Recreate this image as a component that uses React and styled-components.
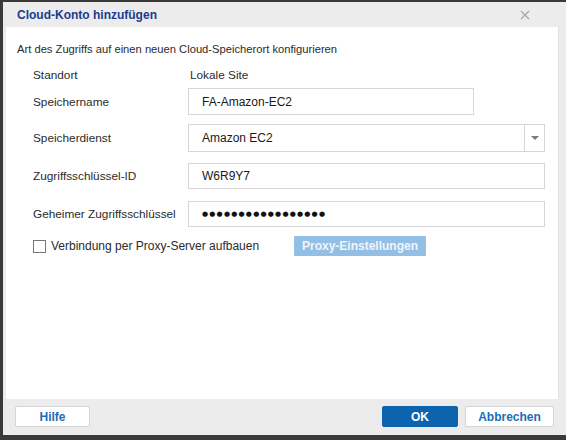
import React from 'react'
import styled, { createGlobalStyle } from 'styled-components'

const GlobalStyle = createGlobalStyle`
  html, body {
    margin: 0;
    padding: 0;
    background: #3a3a3a;
    width: 566px;
    height: 440px;
    overflow: hidden;
  }
  * { box-sizing: border-box; }
`

const Dialog = styled.div`
  margin: 2px 0 0 3px;
  width: 563px;
  height: 433px;
  background: #ececec;
  display: flex;
  flex-direction: column;
  font-family: "Liberation Sans", Arial, sans-serif;
`

const Header = styled.div`
  height: 25px;
  display: flex;
  align-items: center;
  justify-content: space-between;
  padding: 0 36px 0 14px;
  background: #ececec;
`

const Title = styled.h1`
  margin: 0;
  font-size: 12px;
  font-weight: bold;
  color: #1d3b8e;
`

const Close = styled.svg`
  width: 10px;
  height: 10px;
  display: block;
`

const Body = styled.div`
  flex: 1;
  margin: 0 7px 0 3px;
  background: #fff;
  border-right: 1px solid #e2e2e2;
  padding: 15px 0 0 11px;
  display: flex;
  flex-direction: column;
`

const Intro = styled.div`
  font-size: 11.2px;
  line-height: 14px;
  color: #2b2b2b;
`

const Row = styled.div`
  display: flex;
  align-items: center;
  margin-top: ${p => p.$gap}px;
  padding-left: 16px;
`

const Label = styled.div`
  width: 155px;
  font-size: 11.8px;
  line-height: 14px;
  color: #2b2b2b;
`

const Value = styled.div`
  font-size: 11.8px;
  line-height: 14px;
  color: #2b2b2b;
  padding-left: 2px;
`

const Field = styled.div`
  width: ${p => p.$w}px;
  height: ${p => p.$h}px;
  border: 1px solid #d6d6d6;
  display: flex;
  align-items: center;
  padding-left: 13px;
  font-size: 12px;
  color: #1a1a1a;
  background: #fff;
`

const Select = styled(Field)`
  padding-right: 0;
  justify-content: space-between;
`

const Arrow = styled.div`
  width: 20px;
  height: 100%;
  border-left: 1px solid #d6d6d6;
  display: flex;
  align-items: center;
  justify-content: center;
  &::after {
    content: "";
    border-left: 4px solid transparent;
    border-right: 4px solid transparent;
    border-top: 4px solid #7a7a7a;
  }
`

const Dots = styled.span`
  font-family: "DejaVu Sans", sans-serif;
  font-size: 7px;
  letter-spacing: 1.2px;
  color: #111;
`

const CheckRow = styled.div`
  display: flex;
  align-items: center;
  margin-top: 9px;
  padding-left: 16px;
`

const Check = styled.span`
  width: 13px;
  height: 13px;
  border: 1px solid #777;
  background: #fff;
  margin-right: 5px;
`

const CheckLabel = styled.span`
  font-size: 12px;
  color: #2b2b2b;
  width: 243px;
`

const ProxyButton = styled.button`
  width: 132px;
  height: 20px;
  border: none;
  border-radius: 1px;
  background: #92bfe3;
  color: #eef5fb;
  font-family: "Liberation Sans", Arial, sans-serif;
  font-size: 12px;
  font-weight: bold;
  padding: 0;
`

const Footer = styled.div`
  height: 36px;
  display: flex;
  align-items: flex-start;
  padding: 7px 12px 0 12px;
  gap: 7px;
`

const Spacer = styled.div`
  flex: 1;
`

const Button = styled.button`
  width: ${p => p.$w}px;
  height: 21px;
  border: 1px solid ${p => (p.$primary ? '#0c63ae' : '#d4d4d4')};
  border-radius: 2px;
  background: ${p => (p.$primary ? '#0c63ae' : '#fff')};
  color: ${p => (p.$primary ? '#fff' : '#1e6db5')};
  font-family: "Liberation Sans", Arial, sans-serif;
  font-size: 12px;
  font-weight: bold;
  padding: 0;
`

export default function App() {
  return (
    <>
      <GlobalStyle />
      <Dialog>
        <Header>
          <Title>Cloud-Konto hinzufügen</Title>
          <Close viewBox="0 0 10 10">
            <path d="M1 1L9 9M9 1L1 9" stroke="#a8a8a8" strokeWidth="1.3" />
          </Close>
        </Header>
        <Body>
          <Intro>Art des Zugriffs auf einen neuen Cloud-Speicherort konfigurieren</Intro>
          <Row $gap={12}>
            <Label>Standort</Label>
            <Value>Lokale Site</Value>
          </Row>
          <Row $gap={6}>
            <Label>Speichername</Label>
            <Field $w={286} $h={27}>FA-Amazon-EC2</Field>
          </Row>
          <Row $gap={9}>
            <Label>Speicherdienst</Label>
            <Select $w={357} $h={28}>
              Amazon EC2
              <Arrow />
            </Select>
          </Row>
          <Row $gap={11}>
            <Label>Zugriffsschlüssel-ID</Label>
            <Field $w={357} $h={26}>W6R9Y7</Field>
          </Row>
          <Row $gap={12}>
            <Label>Geheimer Zugriffsschlüssel</Label>
            <Field $w={357} $h={26}>
              <Dots>●●●●●●●●●●●●●●●●●</Dots>
            </Field>
          </Row>
          <CheckRow>
            <Check />
            <CheckLabel>Verbindung per Proxy-Server aufbauen</CheckLabel>
            <ProxyButton>Proxy-Einstellungen</ProxyButton>
          </CheckRow>
        </Body>
        <Footer>
          <Button $w={75}>Hilfe</Button>
          <Spacer />
          <Button $w={76} $primary>OK</Button>
          <Button $w={89}>Abbrechen</Button>
        </Footer>
      </Dialog>
    </>
  )
}
